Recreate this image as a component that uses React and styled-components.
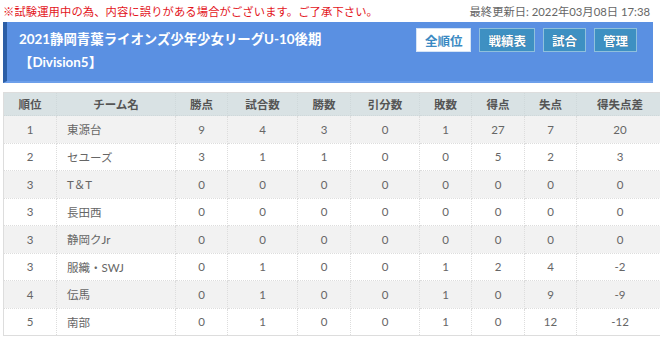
import React from 'react';
import styled, { createGlobalStyle } from 'styled-components';

const GlobalStyle = createGlobalStyle`
  body {
    margin: 0;
    background: #fff;
    font-family: "Lato", "Noto Sans CJK JP", sans-serif;
  }
`;

const Page = styled.div`
  padding: 0 7px 0 3px;
`;

const NoticeBar = styled.div`
  display: flex;
  justify-content: space-between;
  align-items: center;
  height: 21px;
  font-size: 11.3px;
`;

const Notice = styled.span`
  color: #e3141b;
  letter-spacing: 0.1px;
`;

const Updated = styled.span`
  color: #666;
  padding-right: 3px;
`;

const Banner = styled.div`
  display: flex;
  justify-content: space-between;
  height: 61px;
  margin-top: 1px;
  background: #5a90e2;
  border-left: 4px solid #2c5ea6;
  border-bottom: 2px solid #6d9fea;
  box-sizing: border-box;
`;

const TitleBlock = styled.div`
  display: flex;
  flex-direction: column;
  gap: 0;
  padding: 6px 0 0 12px;
  color: #fff;
  font-weight: bold;
  font-size: 13.4px;
  line-height: 23px;
`;

const Buttons = styled.div`
  display: flex;
  gap: 8px;
  padding: 6px 16px 0 0;
`;

const NavButton = styled.button`
  height: 24px;
  padding: 0 8px;
  box-sizing: border-box;
  font-family: "Noto Sans CJK JP", sans-serif;
  font-size: 12.5px;
  font-weight: bold;
  border: 1px solid ${p => (p.$active ? '#d6e4f5' : '#8fc0dc')};
  background: ${p => (p.$active ? '#fff' : '#3e90c2')};
  color: ${p => (p.$active ? '#3a89c2' : '#fff')};
  text-shadow: ${p => (p.$active ? 'none' : '0 0 1px #1d5a80')};
  min-width: ${p => p.$w}px;
`;

const Table = styled.table`
  margin-top: 9px;
  width: 650px;
  border-collapse: collapse;
  table-layout: fixed;
  font-size: 11.5px;
  color: #666;
  border: 1px solid #ddd;
`;

const HeadRow = styled.tr`
  height: 23px;
`;

const HeadCell = styled.th`
  padding: 0;
  background: #d9e2e4;
  color: #555;
  font-weight: bold;
  font-family: "Noto Sans CJK JP", sans-serif;
  border: 1px dotted #cfd8da;
  width: ${p => p.$w}px;
`;

const Row = styled.tr`
  height: 27.5px;
  background: ${p => (p.$odd ? '#f2f2f2' : '#fff')};
`;

const Cell = styled.td`
  padding: 0 ${p => (p.$left ? '10px' : '0')};
  text-align: ${p => (p.$left ? 'left' : 'center')};
  border: 1px dotted #ddd;
`;

const columns = [
  ['順位', 52],
  ['チーム名', 118],
  ['勝点', 51],
  ['試合数', 69],
  ['勝数', 52],
  ['引分数', 68],
  ['敗数', 51],
  ['得点', 52],
  ['失点', 51],
  ['得失点差', 86],
];

const rows = [
  ['1', '東源台', 9, 4, 3, 0, 1, 27, 7, 20],
  ['2', 'セユーズ', 3, 1, 1, 0, 0, 5, 2, 3],
  ['3', 'T＆T', 0, 0, 0, 0, 0, 0, 0, 0],
  ['3', '長田西', 0, 0, 0, 0, 0, 0, 0, 0],
  ['3', '静岡クJr', 0, 0, 0, 0, 0, 0, 0, 0],
  ['3', '服織・SWJ', 0, 1, 0, 0, 1, 2, 4, -2],
  ['4', '伝馬', 0, 1, 0, 0, 1, 0, 9, -9],
  ['5', '南部', 0, 1, 0, 0, 1, 0, 12, -12],
];

const navs = [
  ['全順位', true, 53],
  ['戦績表', false, 54],
  ['試合', false, 42],
  ['管理', false, 42],
];

export default function App() {
  return (
    <Page>
      <GlobalStyle />
      <NoticeBar>
        <Notice>※試験運用中の為、内容に誤りがある場合がございます。ご了承下さい。</Notice>
        <Updated>最終更新日: 2022年03月08日 17:38</Updated>
      </NoticeBar>
      <Banner>
        <TitleBlock>
          <span>2021静岡青葉ライオンズ少年少女リーグU-10後期</span>
          <span>【Division5】</span>
        </TitleBlock>
        <Buttons>
          {navs.map(([label, active, w]) => (
            <NavButton key={label} $active={active} $w={w}>{label}</NavButton>
          ))}
        </Buttons>
      </Banner>
      <Table>
        <thead>
          <HeadRow>
            {columns.map(([label, w]) => (
              <HeadCell key={label} $w={w}>{label}</HeadCell>
            ))}
          </HeadRow>
        </thead>
        <tbody>
          {rows.map((r, i) => (
            <Row key={i} $odd={i % 2 === 0}>
              {r.map((v, j) => (
                <Cell key={j} $left={j === 1}>{v}</Cell>
              ))}
            </Row>
          ))}
        </tbody>
      </Table>
    </Page>
  );
}
